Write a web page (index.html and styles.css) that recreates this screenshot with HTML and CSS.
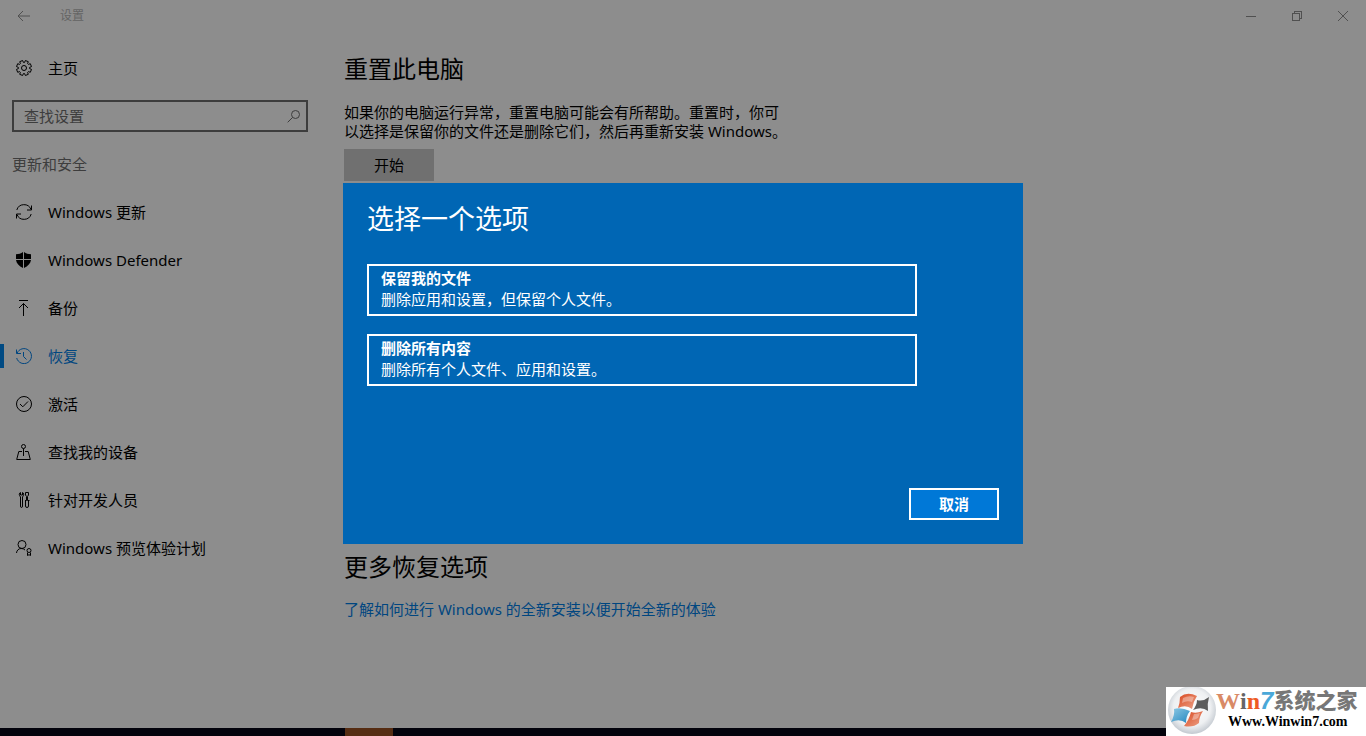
FILE: index.html
```html
<!DOCTYPE html>
<html lang="zh-CN">
<head>
<meta charset="utf-8">
<meta name="viewport" content="width=device-width, initial-scale=1">
<title>设置</title>
<link rel="stylesheet" href="styles.css">
</head>
<body>
<div class="window">
  <header class="titlebar">
    <button class="caption-button" type="button" aria-label="返回">
      <svg width="14" height="12" viewBox="0 0 14 12"><path d="M1 6h12M6 1L1 6l5 5"/></svg>
    </button>
    <span class="titlebar-name">设置</span>
    <div class="caption-controls">
      <button class="caption-button" type="button" aria-label="最小化">
        <svg class="crisp" width="10" height="10" viewBox="0 0 10 10"><path d="M0 5.500h10"/></svg>
      </button>
      <button class="caption-button" type="button" aria-label="还原">
        <svg class="crisp" width="10" height="10" viewBox="0 0 10 10"><path d="M.5 2.500h7v7h-7zM2.500 2.500v-2h7v7h-2"/></svg>
      </button>
      <button class="caption-button" type="button" aria-label="关闭">
        <svg width="10" height="10" viewBox="0 0 10 10"><path d="M0 0l10 10M10 0L0 10"/></svg>
      </button>
    </div>
  </header>

  <div class="layout">
    <aside class="sidebar">
      <a class="nav-item home" href="#home">
        <svg class="icon" viewBox="0 0 16 16"><path stroke-linejoin="round" d="M8.600 2.400L9.400.5L12.300 1.700L11.600 3.600L12.400 4.400L14.300 3.700L15.500 6.600L13.600 7.400V8.600L15.500 9.400L14.300 12.300L12.400 11.600L11.600 12.400L12.300 14.300L9.400 15.500L8.600 13.600H7.400L6.600 15.500L3.700 14.300L4.400 12.400L3.600 11.600L1.700 12.300L.5 9.400L2.400 8.600V7.400L.5 6.600L1.700 3.700L3.600 4.400L4.400 3.600L3.700 1.700L6.600.5L7.400 2.400z"/><circle cx="8" cy="8" r="2.500"/></svg>
        <span>主页</span>
      </a>
      <div class="search">
        <input class="search-input" type="text" placeholder="查找设置" aria-label="查找设置">
        <svg class="search-icon" width="14" height="14" viewBox="0 0 14 14"><circle cx="8.500" cy="5.500" r="4"/><path d="M5.500 8.500L.7 13.300"/></svg>
      </div>
      <h2 class="group-title">更新和安全</h2>
      <nav class="nav">
        <a class="nav-item" href="#update">
          <svg class="icon" viewBox="0 0 16 16"><path d="M.8 6A7.500 7.500 0 0 1 15 5.500M15.500 1.500v4.500H11M15.200 10A7.500 7.500 0 0 1 1 10.500M.5 14.500V10H5"/></svg>
          <span>Windows 更新</span>
        </a>
        <a class="nav-item" href="#defender">
          <svg class="icon solid" viewBox="0 0 16 16"><path d="M7 0v7H0V2.200C2.800 2.200 5 1.500 7 0zM8 0c2 1.500 4.200 2.200 7 2.200V7H8zM0 8h7v8C3 14 .5 11.500 0 8zM8 8h7c-.5 3.500-3 6-7 8z"/></svg>
          <span>Windows Defender</span>
        </a>
        <a class="nav-item" href="#backup">
          <svg class="icon" viewBox="0 0 16 16"><path d="M3 .5h9M7.500 16V3.500M3 8l4.500-4.500L12 8"/></svg>
          <span>备份</span>
        </a>
        <a class="nav-item active" href="#recovery" aria-current="page">
          <svg class="icon" viewBox="0 0 16 16"><path d="M.5 1.500v4H5M1 5.300A7.500 7.500 0 1 1 .7 10M7.500 4v4.500L10.500 11.500"/></svg>
          <span>恢复</span>
        </a>
        <a class="nav-item" href="#activation">
          <svg class="icon" viewBox="0 0 16 16"><circle cx="8" cy="8" r="7.500"/><path d="M4 8l2.800 2.800L12 5.500"/></svg>
          <span>激活</span>
        </a>
        <a class="nav-item" href="#find-device">
          <svg class="icon" viewBox="0 0 16 16"><circle cx="7.500" cy="2.500" r="2"/><path d="M7.500 4.500V12M6 7.500H2.800L.7 15.500h13.600L12.200 7.500H9"/></svg>
          <span>查找我的设备</span>
        </a>
        <a class="nav-item" href="#developers">
          <svg class="icon" viewBox="0 0 16 16"><path d="M4.500.5C3 1 2.700 3 4.500 5v9q0 1.500 1 1.500t1-1.500V5C8.200 3 8 1 6.500.5V3h-2zM9.500.5h3V3l-1 1.500v4h2M9.500.5V3l1 1.500v4H9M9.500 8.500V14q0 1.500 1.500 1.500t1.500-1.500V8.500"/></svg>
          <span>针对开发人员</span>
        </a>
        <a class="nav-item" href="#insider">
          <svg class="icon" viewBox="0 0 16 16"><circle cx="6" cy="4.500" r="4"/><path d="M.5 13c.2-2.500 2-4.400 4.500-4.500q2.500-.1 4 1.500M11.500 12.500v3l1.500-.8 1.500.8v-3"/><circle cx="13" cy="10.500" r="2"/></svg>
          <span>Windows 预览体验计划</span>
        </a>
      </nav>
    </aside>

    <main class="content">
      <section class="reset">
        <h1 class="heading">重置此电脑</h1>
        <p class="description">如果你的电脑运行异常，重置电脑可能会有所帮助。重置时，你可以选择是保留你的文件还是删除它们，然后再重新安装 Windows。</p>
        <button class="start-button" type="button">开始</button>
      </section>
      <section>
        <h1 class="heading">更多恢复选项</h1>
        <a class="link" href="#fresh-start">了解如何进行 Windows 的全新安装以便开始全新的体验</a>
      </section>
    </main>
  </div>

  <div class="overlay">
    <div class="dialog" role="dialog" aria-modal="true" aria-labelledby="dialog-title">
      <h2 class="dialog-title" id="dialog-title">选择一个选项</h2>
      <div class="options">
        <button class="option" type="button"><strong>保留我的文件</strong><span>删除应用和设置，但保留个人文件。</span></button>
        <button class="option" type="button"><strong>删除所有内容</strong><span>删除所有个人文件、应用和设置。</span></button>
      </div>
      <button class="cancel-button" type="button">取消</button>
    </div>
  </div>
</div>
<footer class="taskbar"><span class="task"></span></footer>

<div class="watermark">
  <svg class="watermark-logo" width="50" height="49" viewBox="0 0 50 49">
    <defs>
      <radialGradient id="orb" cx="50%" cy="45%" r="55%"><stop offset="0" stop-color="#fff"/><stop offset=".7" stop-color="#eef0f2"/><stop offset="1" stop-color="#c3c9d0"/></radialGradient>
      <linearGradient id="ember" x1="0" y1="0" x2="1" y2="1"><stop offset="0" stop-color="#d9481f"/><stop offset="1" stop-color="#eda48a"/></linearGradient>
      <linearGradient id="sky" x1="0" y1="0" x2="1" y2="1"><stop offset="0" stop-color="#8cc8e4"/><stop offset="1" stop-color="#2588c0"/></linearGradient>
    </defs>
    <circle cx="26" cy="23" r="24" fill="url(#orb)"/>
    <path d="M14 10Q21 4 31 9Q27 15 26 22Q20 17 12 21Q14 16 14 10z" fill="url(#ember)"/>
    <path d="M31 13Q37 15 43 10Q41 17 42 24Q36 19 27 23Q31 18 31 13z" fill="#5d5d5d"/>
    <path d="M8 22Q15 20 24 24Q20 29 20 36Q14 31 5 35Q9 28 8 22z" fill="url(#sky)"/>
    <path d="M25 25Q30 27 37 24Q33 30 33 36Q27 41 18 39Q23 33 25 25z" fill="url(#ember)"/>
    <path d="M17 11q6-3 11-1l-2 5q-5-2-10 1zM28 27q3 0 6-1l-2 5q-3 2-6 2z" fill="#fff" opacity=".35"/>
  </svg>
  <div class="watermark-text">
    <div class="brand"><span class="brand-w">W</span><span class="brand-i">i</span><span class="brand-n">n</span><span class="brand-seven">7</span><span class="brand-name">系统之家</span></div>
    <div class="site">Www.Winwin7.com</div>
  </div>
</div>
</body>
</html>
```

FILE: styles.css
```css
* {
  box-sizing: border-box;
}

body {
  margin: 0;
  height: 100vh;
  display: flex;
  flex-direction: column;
  overflow: hidden;
  background: #8d8d8d;
  color: #000;
  font: 15px/20px "Noto Sans", "Noto Sans CJK SC", sans-serif;
}

button,
input {
  font: inherit;
  color: inherit;
  border: 0;
  border-radius: 0;
  margin: 0;
  padding: 0;
  background: none;
}

a {
  color: inherit;
  text-decoration: none;
}

h1,
h2,
p {
  margin: 0;
  font-weight: 400;
}

svg {
  display: block;
  flex: none;
  fill: none;
  stroke: currentColor;
}

.crisp {
  shape-rendering: crispEdges;
}

.window {
  position: relative;
  flex: 1;
  min-height: 0;
  display: flex;
  flex-direction: column;
}

/* Title bar */
.titlebar {
  display: flex;
  align-items: center;
  height: 32px;
  color: #505050;
  font-size: 12px;
}

.titlebar-name {
  padding-left: 12px;
  color: #646464;
}

.caption-controls {
  display: flex;
  margin-left: auto;
}

.caption-button {
  display: flex;
  align-items: center;
  justify-content: center;
  width: 46px;
  height: 32px;
}

.titlebar > .caption-button {
  width: 48px;
}

/* Sidebar */
.layout {
  flex: 1;
  display: flex;
  gap: 24px;
}

.sidebar {
  flex: 0 0 320px;
  padding-top: 12px;
}

.nav-item {
  display: flex;
  align-items: center;
  gap: 16px;
  height: 48px;
  padding-left: 16px;
}

.icon {
  width: 16px;
  height: 16px;
}

.solid {
  fill: currentColor;
  stroke: none;
}

.search {
  display: flex;
  align-items: center;
  height: 32px;
  margin: 8px 12px 0;
  padding: 0 5px 0 10px;
  border: 2px solid #3d3d3d;
  color: #3d3d3d;
}

.search-input {
  flex: 1;
  min-width: 0;
  height: 26px;
  outline: 0;
}

.search-input::placeholder {
  color: #3d3d3d;
  opacity: 1;
}

.group-title {
  padding: 22px 12px 14px;
  font-size: 15px;
  line-height: 20px;
  color: #3d3d3d;
}

.active {
  color: #004680;
  background: linear-gradient(#004a83, #004a83) left center / 4px 24px no-repeat;
}

/* Page content */
.content {
  flex: 1;
  padding: 19px 24px 0 0;
}

.reset {
  min-height: 498px;
}

.heading {
  font-size: 24px;
  line-height: 36px;
}

.description {
  max-width: 446px;
  padding: 16px 0 8px;
  line-height: 19px;
}

.start-button {
  width: 90px;
  height: 32px;
  background: #707070;
}

.link {
  display: inline-block;
  margin-top: 14px;
  color: #004680;
}

/* Dialog */
.overlay {
  position: absolute;
  inset: 0;
  display: flex;
  align-items: center;
  justify-content: center;
  padding-bottom: 2px;
}

.dialog {
  display: flex;
  flex-direction: column;
  width: 680px;
  max-width: 100%;
  min-height: 361px;
  padding: 16px 24px 24px;
  background: #0066b4;
  color: #fff;
}

.dialog-title {
  font-size: 27px;
  line-height: 40px;
}

.options {
  display: grid;
  gap: 18px;
  max-width: 550px;
  margin-top: 25px;
}

.option {
  display: flex;
  flex-direction: column;
  height: 52px;
  padding: 2px 12px 0;
  border: 2px solid #fff;
  text-align: left;
  line-height: 21px;
}

.cancel-button {
  width: 90px;
  height: 32px;
  margin: auto 0 0 auto;
  border: 2px solid #fff;
  background: #0078d7;
  font-weight: 700;
}

/* Task bar */
.taskbar {
  display: flex;
  height: 8px;
  padding-left: 345px;
  background: #03030c;
}

.task {
  width: 48px;
  background: #562d13;
}

/* Site badge */
.watermark {
  position: absolute;
  right: 0;
  bottom: 0;
  display: flex;
  width: 200px;
  height: 49px;
  background: #fff;
}

.watermark-logo {
  stroke: none;
}

.watermark-text {
  white-space: nowrap;
}

.brand {
  display: flex;
  height: 27px;
  color: #777;
  font: 700 24px/28px "Liberation Serif", serif;
}

.brand-w {
  color: #d98a66;
}

.brand-i {
  color: #666;
}

.brand-n {
  color: #ee5a24;
}

.brand-seven {
  color: #4aa8d8;
  font-family: "Liberation Sans", sans-serif;
  font-style: italic;
}

.brand-name {
  font: 900 21px/24px "Noto Sans CJK SC", sans-serif;
}

.site {
  padding-left: 12px;
  color: #000;
  font: 700 14px/16px "Liberation Serif", serif;
}
```
